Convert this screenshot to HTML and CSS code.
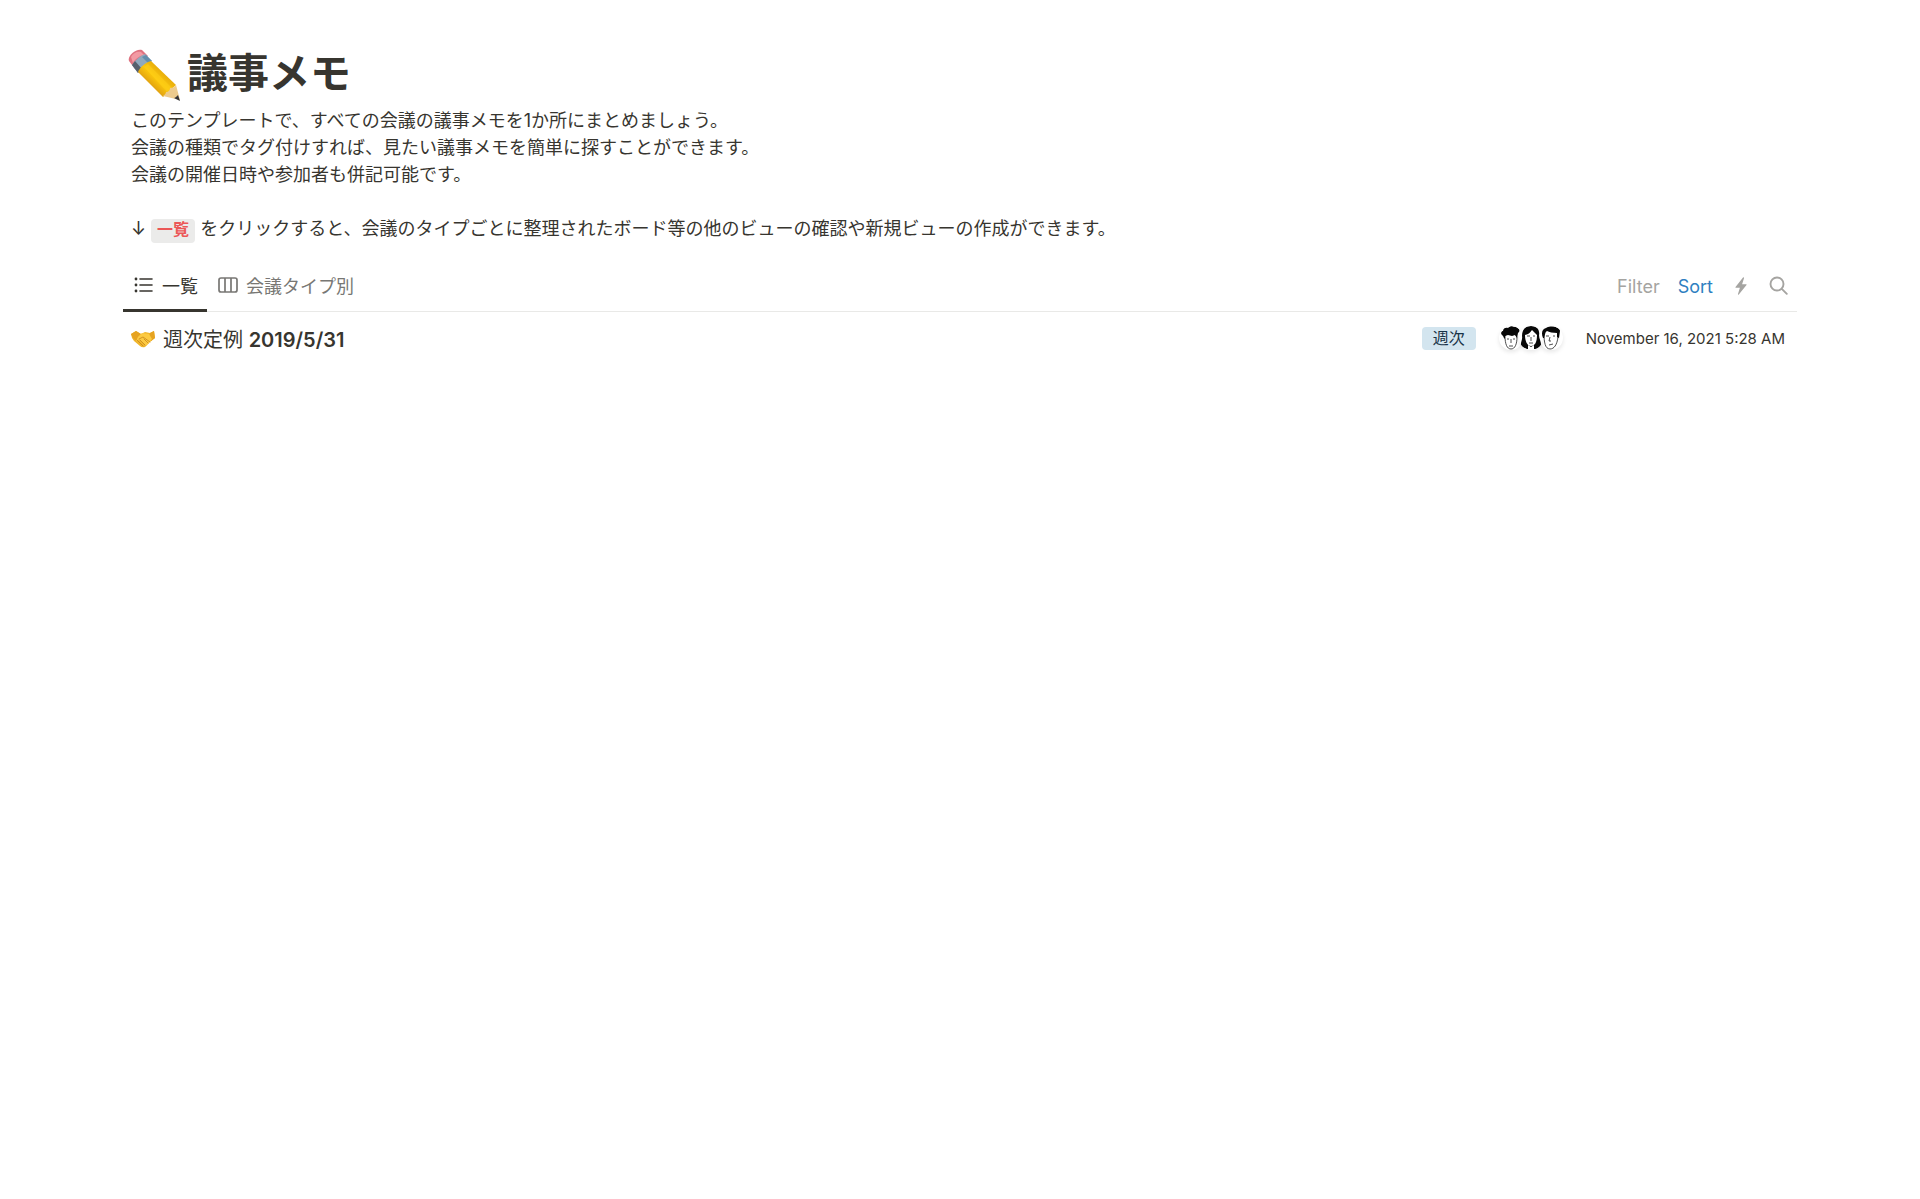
FILE: index.html
```
<!DOCTYPE html>
<html lang="ja">
<head>
    <meta charset="UTF-8">
    <meta name="viewport" content="width=device-width, initial-scale=1.0">
    <title>議事メモ</title>
    <link rel="stylesheet" href="styles.css">
</head>
<body>
    <main class="page">
        <header class="page-header">
            <svg class="pencil" viewBox="0 0 52 52" aria-hidden="true">
                <defs>
                    <linearGradient id="wood" x1="0" y1="1" x2="1" y2="0">
                        <stop offset="0.3" stop-color="#dc9b13"/>
                        <stop offset="0.5" stop-color="#fcc70b"/>
                        <stop offset="0.72" stop-color="#e2a70c"/>
                    </linearGradient>
                </defs>
                <path d="M1 12C-1 7 8-1 14 1l6 6L7 20z" fill="#df7280"/>
                <path d="M3 8C5 4 9 2 13 3l3 3C11 7 7 10 5 14z" fill="#f29aa3"/>
                <path d="M4 16C7 11 12 7 17 5l7 7C18 14 13 19 10 24z" fill="#8fa9bd"/>
                <path d="M4 16l3-4 7 8-4 4z" fill="#57606d"/>
                <path d="M18 6l6 6-4 2-6-6z" fill="#628fae"/>
                <path d="M10 23c2-5 7-9 13-11l25 24-13 12z" fill="url(#wood)"/>
                <path d="M16 18l4-3 24 24-5 4z" fill="#ffd21c" opacity="0.5"/>
                <path d="M35 47c2-1 3-3 3-4 3 0 4-2 4-4 3 0 5-1 6-3l4 15z" fill="#edcb8d"/>
                <path d="M46 49c1 0 3-2 4-3l2 6z" fill="#333437"/>
            </svg>
            <h1>議事メモ</h1>
        </header>

        <section class="intro">
            <p>このテンプレートで、すべての会議の議事メモを1か所にまとめましょう。<br>
            会議の種類でタグ付けすれば、見たい議事メモを簡単に探すことができます。<br>
            会議の開催日時や参加者も併記可能です。</p>
            <p>↓ <code>一覧</code> をクリックすると、会議のタイプごとに整理されたボード等の他のビューの確認や新規ビューの作成ができます。</p>
        </section>

        <div class="toolbar">
            <div class="tabs">
                <button class="tab active" type="button">
                    <svg viewBox="0 0 20 20" aria-hidden="true">
                        <g fill="currentColor"><circle cx="2" cy="4" r="1.4"/><circle cx="2" cy="10" r="1.4"/><circle cx="2" cy="16" r="1.4"/></g>
                        <path d="M6 4h12M6 10h12M6 16h12" fill="none" stroke="currentColor" stroke-width="1.6" stroke-linecap="round"/>
                    </svg>
                    一覧
                </button>
                <button class="tab" type="button">
                    <svg viewBox="0 0 20 20" aria-hidden="true">
                        <path d="M3 3h14q2 0 2 2v10q0 2-2 2H3q-2 0-2-2V5q0-2 2-2zM7 3v14M13 3v14" fill="none" stroke="currentColor" stroke-width="1.7"/>
                    </svg>
                    会議タイプ別
                </button>
            </div>
            <div class="actions">
                <button type="button">Filter</button>
                <button class="sort" type="button">Sort</button>
                <button type="button" aria-label="Automations">
                    <svg viewBox="0 0 20 20" aria-hidden="true">
                        <path d="M12 1.5 4.5 11q-.5.8.4.8h4L7 18q-.2 1.300.8.400L15.500 9q.5-.8-.4-.8h-4L13 2.200q.1-1.300-1-.7z" fill="currentColor"/>
                    </svg>
                </button>
                <button type="button" aria-label="Search">
                    <svg viewBox="0 0 20 20" aria-hidden="true">
                        <path d="M14.500 8a6.500 6.500 0 1 1-13 0 6.500 6.500 0 0 1 13 0zM12.800 12.800l5 5" fill="none" stroke="currentColor" stroke-width="1.900" stroke-linecap="round"/>
                    </svg>
                </button>
            </div>
        </div>

        <ul class="memo-list">
            <li>
                <a class="memo" href="#">
                    <svg class="handshake" viewBox="0 0 24 24" aria-hidden="true">
                        <path d="M0 8l5-3 5 3 4-2 5 1 4-2 1 7-5 4-5 5q-3 1-5-1l-6-5-2-3z" fill="#f0b62c"/>
                        <path d="M0 8l5-3 5 3-3 3-2 4-3-3zM19 7l4-2 1 7-4 3-2-5z" fill="#e6a321"/>
                        <path d="M7 11l4-4 7 1 3 5-6 7-6-6-4 1z" fill="#fcca42"/>
                        <path d="M8 13l4-2 7 5M6 14l6 6M9 14l5 5M13 13l4 4" fill="none" stroke="#c6861b" stroke-width="0.8" stroke-linecap="round"/>
                    </svg>
                    <span>週次定例 <strong>2019/5/31</strong></span>
                </a>
                <span class="tag">週次</span>
                <div class="people">
                    <svg class="face" viewBox="0 0 24 24" role="img" aria-label="参加者1">
                        <path d="M6 10c0 8 2 13 6 13s6-5 6-12l-3-5-7 1z" fill="#fff" stroke="#222" stroke-width="0.8"/>
                        <path d="M6 13C4 12 5 10 3 9 1 7 3 5 4 5c0-3 3-4 5-3 2-2 5-2 6-1 3-1 3 1 5 2 1 2 0 3-1 4l-1 5-2-3-3 1-4-1-3 1z" fill="#080808"/>
                        <path d="M8 13h2m4 0h2M12 13v4m-2 3h4" fill="none" stroke="#222" stroke-width="0.8"/>
                    </svg>
                    <svg class="face" viewBox="0 0 24 24" role="img" aria-label="参加者2">
                        <path d="M3 21C0 18 4 14 3 10 3 4 6 0 12 0s9 4 8 9c0 5 4 9 1 13l-5 1H8z" fill="#080808"/>
                        <path d="M6 9c5-1 6-4 7-5l5 5c0 7-2 11-6 11S6 15 6 9z" fill="#fff"/>
                        <path d="M9 19v4q3 2 6 0v-4l-3 2z" fill="#fff"/>
                        <path d="M8 10h3m3 0h2M12 11v4m-2 2h4" fill="none" stroke="#222" stroke-width="0.8"/>
                    </svg>
                    <svg class="face" viewBox="0 0 24 24" role="img" aria-label="参加者3">
                        <path d="M5 7c0 9 1 16 6 16 4 0 7-4 8-12l-1-7H7z" fill="#fff" stroke="#222" stroke-width="0.8"/>
                        <path d="M4 12C2 7 3 3 7 2c5-3 14-1 14 3l-1 7-2-1V7c-4 0-8-1-10-2-2 1-2 4-3 7z" fill="#080808"/>
                        <path d="M7 10h3m4 0h2M11 11l-1 4h2m-2 4 4-1" fill="none" stroke="#222" stroke-width="0.8"/>
                    </svg>
                </div>
                <time datetime="2021-11-16T05:28">November 16, 2021 5:28 AM</time>
            </li>
        </ul>
    </main>
</body>
</html>
```
FILE: styles.css
```
* {
    box-sizing: border-box;
}

body {
    margin: 0;
    background-color: #fff;
    color: #37352f;
    font-family: Inter, "Noto Sans CJK JP", sans-serif;
    font-size: 18px;
}

button {
    display: flex;
    align-items: center;
    padding: 0;
    border: 0;
    background: none;
    color: inherit;
    font: inherit;
    cursor: pointer;
}

svg {
    display: block;
    flex: none;
}

.page {
    padding: 44px 123px;
}

.page-header {
    display: flex;
    align-items: flex-start;
    gap: 7px;
    height: 63px;
    padding-left: 5px;
}

.pencil {
    width: 52px;
    height: 52px;
    margin-top: 5px;
}

h1 {
    margin: 0;
    font-size: 41px;
    font-weight: 700;
    line-height: 58px;
}

.intro {
    padding-left: 8px;
    line-height: 27px;
}

.intro p {
    margin: 0 0 27px;
}

.intro p:last-child {
    margin-bottom: 16px;
}

code {
    padding: 3px 6px;
    border-radius: 4px;
    background-color: #ebebea;
    color: #eb5757;
    font-family: "Liberation Mono", "Noto Sans CJK JP", monospace;
    font-size: 16px;
    font-weight: 700;
}

.toolbar {
    display: flex;
    justify-content: space-between;
    height: 51px;
    border-bottom: 1px solid #e9e9e7;
}

.tabs {
    display: flex;
}

.tab {
    gap: 8px;
    height: 51px;
    padding: 0 9px 0 11px;
    border-bottom: 3px solid transparent;
    color: #787774;
}

.tab svg {
    width: 20px;
    height: 20px;
}

.tab.active {
    border-color: #37352f;
    color: #37352f;
}

.actions {
    display: flex;
    align-items: center;
    gap: 18px;
    padding-right: 8px;
    color: #a5a4a1;
}

.actions svg {
    width: 20px;
    height: 20px;
}

.sort {
    color: #2f7fc1;
}

.memo-list {
    margin: 0;
    padding: 0 12px 0 8px;
    list-style: none;
}

.memo-list li {
    display: flex;
    align-items: center;
    height: 52px;
}

.memo {
    display: flex;
    flex: 1;
    align-items: center;
    gap: 8px;
    color: inherit;
    font-size: 20px;
    text-decoration: none;
}

.memo strong {
    font-weight: 600;
}

.handshake {
    width: 24px;
    height: 24px;
}

.tag {
    padding: 0 11px;
    border-radius: 4px;
    background-color: #d3e5ef;
    color: #183347;
    font-size: 16px;
    line-height: 23px;
}

.people {
    display: flex;
    margin: 0 23px;
}

.face {
    width: 24px;
    height: 24px;
    border-radius: 50%;
    box-shadow: 0 2px 4px rgba(15, 15, 15, 0.1);
}

.face + .face {
    margin-left: -4px;
}

time {
    font-size: 15px;
}
```
